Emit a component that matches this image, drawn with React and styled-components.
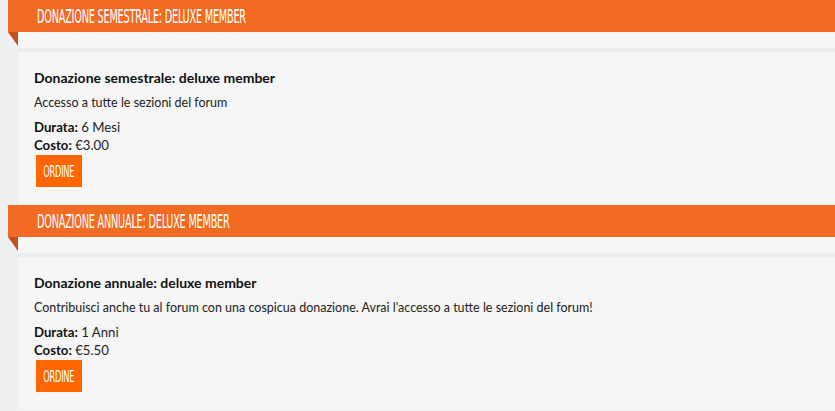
import styled, { createGlobalStyle } from "styled-components";

const GlobalStyle = createGlobalStyle`
  body {
    margin: 0;
    background: #efefef;
    font-family: Lato, "Noto Sans", sans-serif;
  }
`;

const Page = styled.div`
  width: 835px;
  overflow: hidden;
`;

const Section = styled.section`
  display: flex;
  flex-direction: column;
`;

const Banner = styled.div`
  position: relative;
  margin-left: 8px;
  height: 32px;
  background: #f26b23;
  display: flex;
  align-items: center;
  padding-left: 29px;

  &::after {
    content: "";
    position: absolute;
    left: 0;
    top: 32px;
    border-top: 14px solid #c4521a;
    border-left: 10px solid transparent;
  }
`;

const BannerTitle = styled.h2`
  margin: 0;
  color: #fff;
  font-family: "DejaVu Sans Condensed", "DejaVu Sans", sans-serif;
  font-weight: normal;
  font-size: 20px;
  letter-spacing: -0.4px;
  text-transform: uppercase;
  transform: scaleX(0.54);
  transform-origin: left center;
  white-space: nowrap;
`;

const Body = styled.div`
  margin-left: 18px;
  background: #f6f6f6;
  padding-bottom: 18px;
`;

const Stripe = styled.div`
  height: 16px;
  border-bottom: 4px solid #ededed;
`;

const Content = styled.div`
  padding: 17px 0 0 16px;
  display: flex;
  flex-direction: column;
  align-items: flex-start;
`;

const Name = styled.h3`
  margin: 0;
  font-size: 14px;
  line-height: 18px;
  font-weight: bold;
  color: #111;
`;

const Description = styled.p`
  margin: 7px 0 6px;
  font-size: 12.5px;
  line-height: 18px;
  color: #222;
`;

const Line = styled.div`
  font-size: 13.2px;
  line-height: 18px;
  color: #222;

  b {
    color: #111;
  }
`;

const OrderButton = styled.button`
  margin: 1px 0 0 2px;
  width: 46px;
  height: 32px;
  border: none;
  background: #ff6600;
  color: #fff;
  padding: 0;
  display: flex;
  align-items: center;
  justify-content: center;
  cursor: pointer;

  span {
    font-family: "DejaVu Sans Condensed", "DejaVu Sans", sans-serif;
    font-size: 16px;
    letter-spacing: -0.5px;
    display: inline-block;
    transform: scaleX(0.58);
  }
`;

const plans = [
  {
    banner: "Donazione semestrale: deluxe member",
    name: "Donazione semestrale: deluxe member",
    text: "Accesso a tutte le sezioni del forum",
    duration: "6 Mesi",
    cost: "€3.00",
  },
  {
    banner: "Donazione annuale: deluxe member",
    name: "Donazione annuale: deluxe member",
    text: "Contribuisci anche tu al forum con una cospicua donazione. Avrai l'accesso a tutte le sezioni del forum!",
    duration: "1 Anni",
    cost: "€5.50",
  },
];

const App = () => {
  return (
    <Page>
      <GlobalStyle />
      {plans.map((p) => (
        <Section key={p.banner}>
          <Banner>
            <BannerTitle>{p.banner}</BannerTitle>
          </Banner>
          <Body>
            <Stripe />
            <Content>
              <Name>{p.name}</Name>
              <Description>{p.text}</Description>
              <Line><b>Durata:</b> {p.duration}</Line>
              <Line><b>Costo:</b> {p.cost}</Line>
              <OrderButton><span>ORDINE</span></OrderButton>
            </Content>
          </Body>
        </Section>
      ))}
    </Page>
  );
};

export default App;
